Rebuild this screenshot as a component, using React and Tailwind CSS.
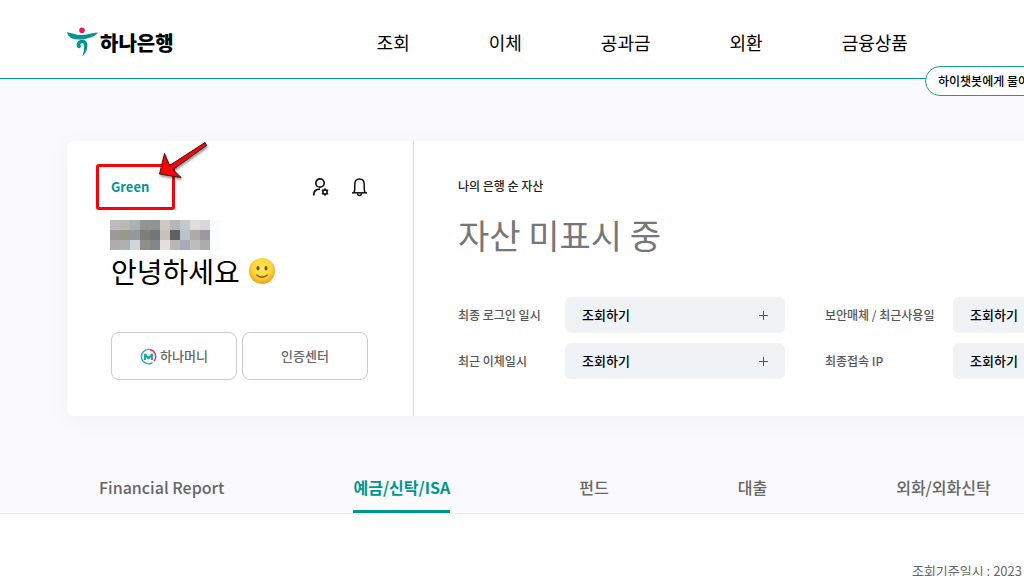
import React from "react";

const NAV = ["조회", "이체", "공과금", "외환", "금융상품"];
const TABS = ["Financial Report", "예금/신탁/ISA", "펀드", "대출", "외화/외화신탁"];

const MOSAIC = [
  ["#bfbabd", "#b9b9b1", "#adb0b1", "#949494", "#8f9394", "#cdc8c5", "#b5b7b7", "#c4c9cd", "#dcdddf", "#d9d5d8", "#f8fcff"],
  ["#a09799", "#99998d", "#939a9d", "#7f7e7b", "#717777", "#c7c1be", "#605f63", "#bac1c7", "#adaaa8", "#9b999d", "#f6fcff"],
  ["#b3aaad", "#afb0b0", "#d0d5da", "#8f8e8a", "#838789", "#e5e0dd", "#b7b8b3", "#aaa9b7", "#bdbdbf", "#aeabae", "#f9fdff"],
];

function Logo() {
  return (
    <a href="#home" className="flex items-center gap-[2px] text-black">
      <svg width="31" height="30" viewBox="0 0 31 30" aria-hidden="true">
        <circle cx="15" cy="3.2" r="2.8" fill="#ed1651" />
        <path
          d="M0 5.200C3.500 5.600 7 7.200 11 7.900c7 1 12-1.800 20-2.300-2.200 3.200-5.800 4.600-9.800 5.600-5.200 1.400-11 1.900-16 .2C2.400 10.400.6 8 0 5.200Z"
          fill="#009591"
        />
        <path
          d="M9.600 18.600c-.2-3.500 2.200-5.800 5.500-5.800 3.800 0 5.600 2.500 5.300 6.300-.3 4.500-2.400 8.300-5.200 10.400 1.200-2.900 1.900-6 1.900-9.400 0-2.500-.4-4.200-2-4.200-1.400 0-1.800 1.200-1.400 3.200.2 1.300-.3 2.200-1.500 2.200-1.500 0-2.500-1.100-2.600-2.700Z"
          fill="#009591"
        />
      </svg>
      <span className="pt-[2px] text-[20px] font-black leading-7">하나은행</span>
    </a>
  );
}

function UserSettingsIcon() {
  return (
    <svg width="18" height="20" viewBox="-1 0 18 20" fill="none" stroke="#111" aria-hidden="true">
      <circle cx="8" cy="6" r="4.200" strokeWidth="1.700" />
      <path d="M1.800 18.500v-.7c0-3.500 2.500-5.600 6.200-5.600" strokeWidth="1.700" />
      <path
        d="m13 12 .9 1.300 1.600-.1-.7 1.800.7 1.800-1.600-.1L13 18l-.9-1.300-1.600.1.700-1.800-.7-1.800 1.600.1Z"
        strokeWidth="1.600"
        strokeLinejoin="round"
      />
    </svg>
  );
}

function BellIcon() {
  return (
    <svg width="18" height="20" viewBox="-0.5 0 18 20" fill="none" stroke="#111" strokeWidth="1.500" aria-hidden="true">
      <path d="M3.500 15.800c.6-1.500.8-3 .8-5V7.200C4.300 4 6 1.900 9 1.900s4.700 2.100 4.700 5.300v3.600c0 2 .2 3.500.8 5" />
      <path d="M1.500 15.800h15" />
      <path d="M7 16.200c0 1.500.8 2.300 2 2.300s2-.8 2-2.300" />
    </svg>
  );
}

function Smile() {
  return (
    <svg width="28" height="28" viewBox="0 0 28 28" role="img" aria-label="웃는 얼굴">
      <defs>
        <radialGradient id="face" cx="50%" cy="40%" r="60%">
          <stop offset="0" stopColor="#ffe95a" />
          <stop offset="0.600" stopColor="#ffd63a" />
          <stop offset="1" stopColor="#f49b16" />
        </radialGradient>
      </defs>
      <circle cx="14" cy="14" r="13" fill="url(#face)" />
      <ellipse cx="10" cy="11.300" rx="1.500" ry="2.300" fill="#795013" />
      <ellipse cx="18" cy="11.300" rx="1.500" ry="2.300" fill="#795013" />
      <path d="M8.800 18c2.800 3 7.600 3 10.400 0" fill="none" stroke="#87540f" strokeWidth="1.300" strokeLinecap="round" />
    </svg>
  );
}

function MoneyIcon() {
  return (
    <svg width="17" height="17" viewBox="0 0 17 17" fill="none" aria-hidden="true">
      <path d="M12.500 14.600A7.200 7.200 0 1 1 9.500 1.400" stroke="#1fa99f" strokeWidth="1.300" />
      <path d="M9.500 1.400a7.200 7.200 0 0 1 4.500 11.700" stroke="#e32e70" strokeWidth="1.500" />
      <path d="M5 12V6.500l3.500 3.800L12 6.500V12" stroke="#1fa99f" strokeWidth="2.200" strokeLinejoin="round" />
    </svg>
  );
}

function Mosaic() {
  return (
    <svg width="110" height="30" viewBox="0 0 110 30" shapeRendering="crispEdges" className="-ml-px block" aria-hidden="true">
      {MOSAIC.map((row, y) =>
        row.map((fill, x) => <rect key={`${x}-${y}`} x={x * 10} y={y * 10} width="10" height="10" fill={fill} />)
      )}
    </svg>
  );
}

function Highlight() {
  return (
    <>
      <div className="pointer-events-none absolute top-[23px] left-[29px] h-[46px] w-[79px] rounded-[3px] border-3 border-[#fb0007]" />
      <svg
        width="56"
        height="46"
        viewBox="0 0 56 46"
        className="pointer-events-none absolute top-0 left-[88px] drop-shadow-[1px_2px_1px_rgba(0,0,0,0.4)]"
        aria-hidden="true"
      >
        <path
          d="M50 1.500 51.500 4.500 18 28.500 26 36.500 4.500 33 9.500 12.500 14.500 24.500Z"
          fill="#fb0007"
          stroke="#222"
          strokeWidth="1"
          strokeLinejoin="round"
        />
      </svg>
    </>
  );
}

function Inquiry({ id, label }) {
  return (
    <div className="flex items-center justify-between">
      <span id={id} className="text-[12px] font-medium text-[#555]">{label}</span>
      <button
        type="button"
        aria-describedby={id}
        className="flex h-9 w-[220px] items-center justify-between rounded-md bg-[#eff3f6] px-[17px] text-[13px] font-medium text-black"
      >
        조회하기
        <svg width="9" height="9" viewBox="0 0 9 9" stroke="#555" shapeRendering="crispEdges" aria-hidden="true">
          <path d="M4.500 0v9M0 4.500h9" />
        </svg>
      </button>
    </div>
  );
}

export default function App() {
  return (
    <div className="min-h-screen overflow-x-hidden bg-white font-['Noto_Sans_CJK_KR',sans-serif] text-black">
      <header className="relative border-b border-[#009591] bg-white">
        <div className="flex h-[78px] items-center px-[67px] pt-[6px]">
          <Logo />
          <nav className="ml-[203px] flex gap-[79px] text-[18px] whitespace-nowrap">
            {NAV.map((item) => (
              <a key={item} href="#menu">{item}</a>
            ))}
          </nav>
        </div>
        <button
          type="button"
          className="absolute top-[66px] left-[925px] h-[30px] rounded-full border border-[#1a9d99] bg-white px-3 text-[12px] font-medium whitespace-nowrap"
        >
          하이챗봇에게 물어보세요
        </button>
      </header>

      <main>
        <div className="bg-[#fafafc] pt-[62px]">
          <section className="mx-[67px] flex min-w-[1150px] rounded-lg bg-white shadow-[0_4px_24px_rgba(0,0,0,0.04)]">
            <div className="relative w-[347px] shrink-0 border-r border-[#d9d9d9] pt-8 pr-[45px] pb-9 pl-11">
              <div className="flex h-7 items-center justify-between">
                <span className="text-[13px] leading-6 font-bold text-[#009591]">Green</span>
                <div className="flex gap-[21px]">
                  <button type="button" aria-label="내 정보 설정"><UserSettingsIcon /></button>
                  <button type="button" aria-label="알림"><BellIcon /></button>
                </div>
              </div>
              <div className="mt-[19px]"><Mosaic /></div>
              <h1 className="flex h-[42px] items-center gap-2 text-[28px]">
                안녕하세요 <Smile />
              </h1>
              <div className="mt-10 grid grid-cols-2 gap-[5px] text-[13px] font-medium text-[#666]">
                <button type="button" className="flex h-12 items-center justify-center gap-[3px] rounded-lg border border-[#ccc]">
                  <MoneyIcon />하나머니
                </button>
                <button type="button" className="h-12 rounded-lg border border-[#ccc]">인증센터</button>
              </div>
              <Highlight />
            </div>

            <div className="flex-1 pt-[31px] pr-11 pb-9 pl-11">
              <h2 className="text-[12px] leading-7 font-medium text-[#222]">나의 은행 순 자산</h2>
              <p className="mt-[7px] text-[34px] leading-[56px] text-[#777]">자산 미표시 중</p>
              <div className="mt-[34px] grid grid-cols-[327px_348px] gap-x-10 gap-y-[10px] whitespace-nowrap">
                <Inquiry id="last-login" label="최종 로그인 일시" />
                <Inquiry id="device" label="보안매체 / 최근사용일" />
                <Inquiry id="last-transfer" label="최근 이체일시" />
                <Inquiry id="last-ip" label="최종접속 IP" />
              </div>
            </div>
          </section>

          <nav className="mt-[47px] flex gap-[129px] border-b border-[#ebebed] px-[99px] text-[16px] whitespace-nowrap">
            {TABS.map((tab, i) => (
              <a
                key={tab}
                href="#tab"
                aria-current={i === 1 ? "page" : undefined}
                className={
                  i === 1
                    ? "h-[50px] border-b-3 border-[#009591] leading-[48px] font-bold text-[#009591]"
                    : "h-[50px] leading-[48px] font-medium text-[#666]"
                }
              >
                {tab}
              </a>
            ))}
          </nav>
        </div>

        <section className="mx-[67px] flex min-w-[955px] justify-end pt-[47px]">
          <p className="text-[13px] leading-5 whitespace-nowrap text-[#666]">조회기준일시 : 2023</p>
        </section>
      </main>
    </div>
  );
}
